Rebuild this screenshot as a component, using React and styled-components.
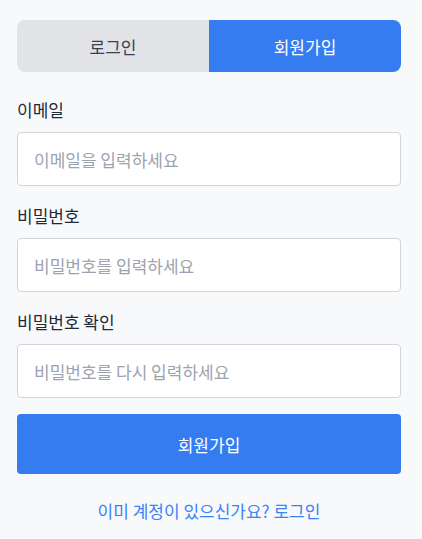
import React from 'react'
import styled, { createGlobalStyle } from 'styled-components'

const Global = createGlobalStyle`
  body {
    margin: 0;
    background: #f8f9fb;
    font-family: "Noto Sans CJK KR", "Noto Sans", sans-serif;
  }
`

const Page = styled.div`
  width: 384px;
  padding: 20px 21px 20px 17px;
  display: flex;
  flex-direction: column;
`

const Tabs = styled.div`
  display: flex;
  height: 52px;
  border-radius: 8px;
  overflow: hidden;
  margin-bottom: 26px;
`

const Tab = styled.button`
  flex: 1;
  border: none;
  font-family: inherit;
  font-size: 17px;
  font-weight: 400;
  cursor: pointer;
  background: ${p => (p.active ? '#357cf1' : '#e2e3e7')};
  color: ${p => (p.active ? '#ffffff' : '#374151')};
`

const Field = styled.div`
  display: flex;
  flex-direction: column;
  margin-bottom: 18px;
`

const Label = styled.label`
  font-size: 17px;
  line-height: 24px;
  font-weight: 400;
  color: #1f2937;
  margin-bottom: 10px;
`

const Input = styled.input`
  height: 54px;
  box-sizing: border-box;
  border: 1px solid #d1d5db;
  border-radius: 4px;
  background: #fff;
  padding: 0 16px;
  font-family: inherit;
  font-size: 17px;
  color: #111827;
  outline: none;
  &::placeholder {
    color: #9ca3af;
  }
`

const Submit = styled.button`
  height: 60px;
  margin-top: -2px;
  border: none;
  border-radius: 4px;
  background: #357cf1;
  color: #fff;
  font-family: inherit;
  font-size: 17px;
  font-weight: 400;
  cursor: pointer;
`

const Switch = styled.a`
  margin-top: 25px;
  text-align: center;
  font-size: 17px;
  line-height: 24px;
  color: #3b82f6;
  cursor: pointer;
`

const fields = [
  { label: '이메일', type: 'email', placeholder: '이메일을 입력하세요' },
  { label: '비밀번호', type: 'password', placeholder: '비밀번호를 입력하세요' },
  { label: '비밀번호 확인', type: 'password', placeholder: '비밀번호를 다시 입력하세요' },
]

export default function App() {
  return (
    <>
      <Global />
      <Page>
        <Tabs>
          <Tab>로그인</Tab>
          <Tab active>회원가입</Tab>
        </Tabs>
        {fields.map(f => (
          <Field key={f.placeholder}>
            <Label>{f.label}</Label>
            <Input type={f.type} placeholder={f.placeholder} />
          </Field>
        ))}
        <Submit>회원가입</Submit>
        <Switch>이미 계정이 있으신가요? 로그인</Switch>
      </Page>
    </>
  )
}
